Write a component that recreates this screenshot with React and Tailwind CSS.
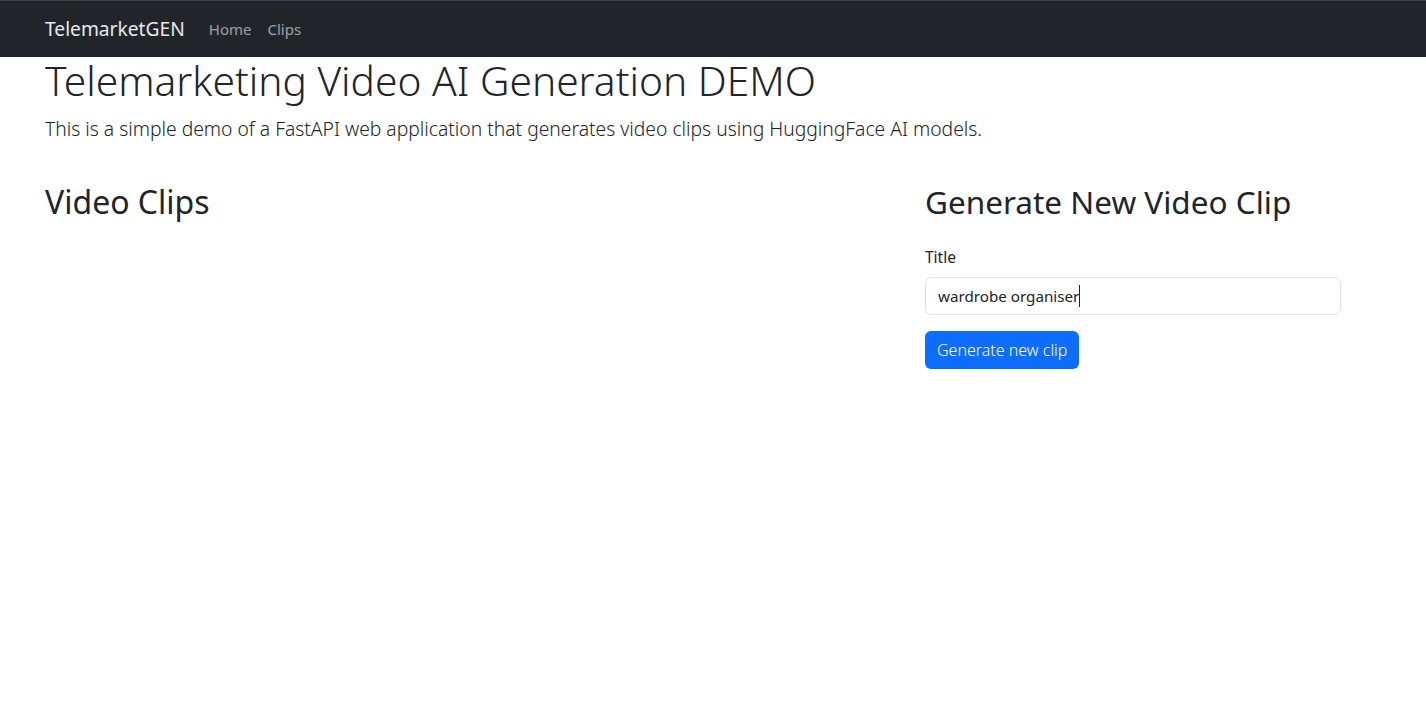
export default function App() {
  return (
    <div className="min-h-[711px] bg-white text-[#212529]" style={{ fontFamily: '"Noto Sans", sans-serif' }}>
      <nav className="h-[57px] bg-[#212529] border-t border-[#3a3f44] flex items-center">
        <div className="ml-[33px] w-[1320px] px-3 flex items-center">
          <span className="text-[19.2px] text-white/90 mr-6 leading-[30px]">TelemarketGEN</span>
          <span className="text-[15px] text-white/55 leading-6">Home</span>
          <span className="text-[15px] text-white/55 leading-6 ml-4">Clips</span>
        </div>
      </nav>
      <main className="ml-[33px] w-[1320px] px-3">
        <h1 className="text-[40.7px] font-light leading-[1.2] -mt-px mb-[9px]">Telemarketing Video AI Generation DEMO</h1>
        <p className="text-[19.3px] font-light leading-[30px]">
          This is a simple demo of a FastAPI web application that generates video clips using HuggingFace AI models.
        </p>
        <div className="flex -mx-3 mt-[39px]">
          <div className="w-2/3 px-3">
            <h2 className="text-[32px] leading-[1.2] font-normal">Video Clips</h2>
          </div>
          <div className="w-1/3 px-3">
            <h2 className="text-[31.5px] leading-[1.2] font-normal mb-6">Generate New Video Clip</h2>
            <label className="block text-[15.5px] leading-6 mb-2">Title</label>
            <div className="h-[38px] border border-[#dee2e6] rounded-md px-3 flex items-center text-[15.2px] leading-6 mb-4">
              <span>wardrobe organiser</span>
              <span className="inline-block w-px h-[22px] bg-[#212529]"></span>
            </div>
            <button className="h-[38px] px-3 rounded-md bg-[#0d6efd] text-white text-[16px] font-light leading-6">
              Generate new clip
            </button>
          </div>
        </div>
      </main>
    </div>
  );
}
